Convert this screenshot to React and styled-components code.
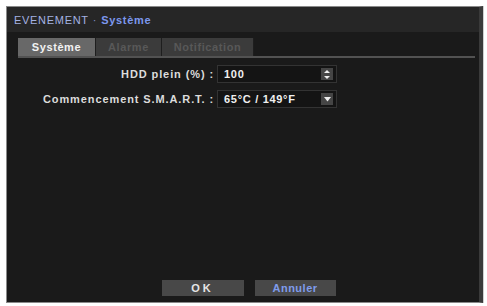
import React from "react";
import styled, { createGlobalStyle } from "styled-components";

const GlobalStyle = createGlobalStyle`
  html, body {
    margin: 0;
    padding: 0;
    background: #ffffff;
  }
  body {
    font-family: "Liberation Sans", Arial, sans-serif;
  }
`;

const Page = styled.div`
  width: 487px;
  height: 306px;
  padding: 6px 4px 3px 6px;
  box-sizing: border-box;
  display: flex;
`;

const Frame = styled.div`
  flex: 1;
  display: flex;
  flex-direction: column;
  border: 1px solid #8a8a8a;
  border-right: 4px solid #3a3a3a;
  background: #1a1a1a;
  box-shadow: 1px 0 0 #cfcfcf;
`;

const TitleBar = styled.div`
  height: 25px;
  display: flex;
  align-items: center;
  padding-left: 7px;
  background: #262626;
  font-size: 11px;
  letter-spacing: 0.7px;
`;

const TitleMain = styled.span`
  color: #a4b2e2;
`;

const TitleSep = styled.span`
  color: #8090c8;
  margin: 0 4px;
`;

const TitleSub = styled.span`
  color: #7c98ee;
  font-weight: bold;
`;

const Body = styled.div`
  flex: 1;
  display: flex;
  flex-direction: column;
  padding: 6px 4px 6px 11px;
`;

const TabRow = styled.div`
  display: flex;
  border-bottom: 2px solid #525252;
`;

const Tab = styled.div`
  width: ${({ w }) => w}px;
  height: 18px;
  display: flex;
  align-items: center;
  justify-content: center;
  box-sizing: border-box;
  border-right: 1px solid #1e1e1e;
  background: ${({ active }) => (active ? "#686868" : "#3b3b3b")};
  color: ${({ active }) => (active ? "#f2f2f2" : "#585858")};
  font-size: 11px;
  font-weight: bold;
  letter-spacing: 0.6px;
`;

const Form = styled.div`
  display: grid;
  grid-template-columns: 196px 120px;
  column-gap: 3px;
  row-gap: 7px;
  margin-top: 7px;
  align-items: center;
`;

const Label = styled.div`
  text-align: right;
  color: #dcdcdc;
  font-size: 11px;
  font-weight: bold;
  letter-spacing: 0.9px;
  white-space: nowrap;
`;

const Field = styled.div`
  height: 18px;
  box-sizing: border-box;
  border: 1px solid #333;
  background: #141414;
  display: flex;
  align-items: center;
  justify-content: space-between;
  padding: 0 3px 0 6px;
  color: #f0f0f0;
  font-size: 11px;
  font-weight: bold;
  letter-spacing: 0.7px;
`;

const Knob = styled.div`
  width: 12px;
  height: 12px;
  background: #454545;
  display: flex;
  align-items: center;
  justify-content: center;
`;

const Spacer = styled.div`
  flex: 1;
`;

const Buttons = styled.div`
  display: flex;
  justify-content: center;
  gap: 11px;
  padding-left: 4px;
`;

const Button = styled.div`
  width: ${({ w }) => w}px;
  height: 16px;
  background: #484848;
  display: flex;
  align-items: center;
  justify-content: center;
  font-size: 11px;
  font-weight: bold;
  letter-spacing: ${({ spaced }) => (spaced ? "3px" : "0.5px")};
  color: ${({ blue }) => (blue ? "#7f9cec" : "#e6e6e6")};
`;

const SpinIcon = () => (
  <svg width="6" height="9" viewBox="0 0 6 9">
    <polygon points="3,0 6,3 0,3" fill="#eee" />
    <polygon points="0,6 6,6 3,9" fill="#eee" />
  </svg>
);

const DownIcon = () => (
  <svg width="7" height="5" viewBox="0 0 7 5">
    <polygon points="0,0 7,0 3.5,4.5" fill="#eee" />
  </svg>
);

const App = () => {
  return (
    <Page>
      <GlobalStyle />
      <Frame>
        <TitleBar>
          <TitleMain>EVENEMENT</TitleMain>
          <TitleSep>·</TitleSep>
          <TitleSub>Système</TitleSub>
        </TitleBar>
        <Body>
          <TabRow>
            <Tab w={78} active>
              Système
            </Tab>
            <Tab w={66}>Alarme</Tab>
            <Tab w={92}>Notification</Tab>
          </TabRow>
          <Form>
            <Label>HDD plein (%) :</Label>
            <Field>
              100
              <Knob>
                <SpinIcon />
              </Knob>
            </Field>
            <Label>Commencement S.M.A.R.T. :</Label>
            <Field>
              65°C / 149°F
              <Knob>
                <DownIcon />
              </Knob>
            </Field>
          </Form>
          <Spacer />
          <Buttons>
            <Button w={82} spaced>
              OK
            </Button>
            <Button w={81} blue>
              Annuler
            </Button>
          </Buttons>
        </Body>
      </Frame>
    </Page>
  );
};

export default App;
